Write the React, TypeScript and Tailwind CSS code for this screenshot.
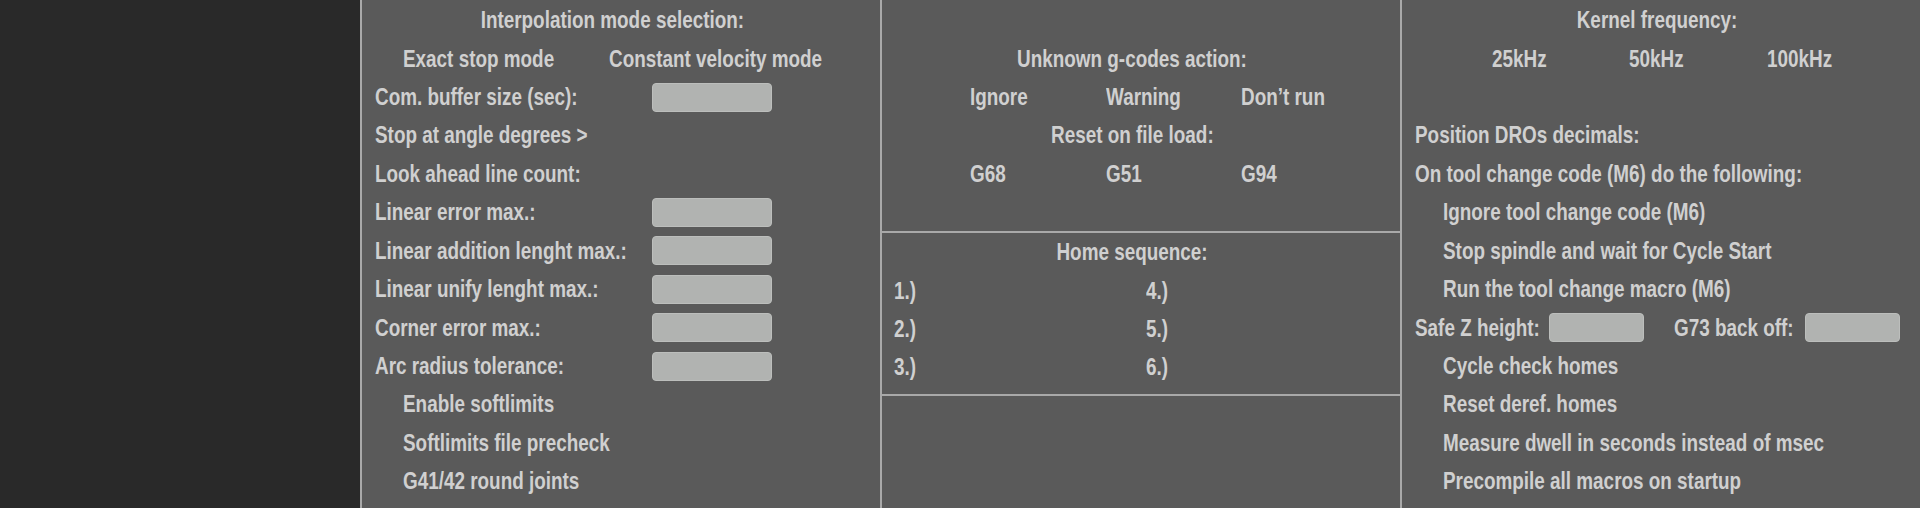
import React from "react";

const font = { fontFamily: '"Liberation Sans", Arial, sans-serif' };

// narrow text (the screen uses a condensed face)
const T: React.FC<{ children?: React.ReactNode; center?: boolean }> = ({ children, center }) => (
  <span className={`inline-block whitespace-nowrap scale-x-[0.787] ${center ? "origin-center" : "origin-left"}`}>
    {children}
  </span>
);

const Row: React.FC<{ children?: React.ReactNode; className?: string }> = ({ children, className = "" }) => (
  <div className={`h-[38.43px] flex items-center shrink-0 whitespace-nowrap ${className}`}>{children}</div>
);

const Field: React.FC<{ className?: string }> = ({ className = "w-[120px]" }) => (
  <div className={`h-[29px] rounded-[4px] bg-[#b1b3b1] border border-[#bcbebc] shrink-0 ${className}`}></div>
);

const App: React.FC = () => {
  const leftFields = [
    ["Com. buffer size (sec):", true],
    ["Stop at angle degrees >", false],
    ["Look ahead line count:", false],
    ["Linear error max.:", true],
    ["Linear addition lenght max.:", true],
    ["Linear unify lenght max.:", true],
    ["Corner error max.:", true],
    ["Arc radius tolerance:", true],
  ] as const;

  return (
    <div className="flex w-[1920px] h-[508px] overflow-hidden bg-[#5a5a5a] text-[#d0d0d0] text-[24px] font-bold" style={font}>
      <div className="w-[360px] h-full bg-[#292929] shrink-0"></div>

      {/* interpolation column */}
      <div className="w-[520px] h-full border-l-2 border-[#a9a9a9] flex flex-col pt-[1px] shrink-0">
        <Row className="justify-center pr-[17px]">
          <T center>Interpolation mode selection:</T>
        </Row>
        <Row className="pl-[41px]">
          <div className="w-[209px]">
            <T>Exact stop mode</T>
          </div>
          <T>Constant velocity mode</T>
        </Row>
        {leftFields.map(([label, input]) => (
          <Row key={label} className="pl-[13px]">
            <div className="w-[277px]">
              <T>{label}</T>
            </div>
            {input && <Field />}
          </Row>
        ))}
        <Row className="pl-[41px]">
          <T>Enable softlimits</T>
        </Row>
        <Row className="pl-[41px]">
          <T>Softlimits file precheck</T>
        </Row>
        <Row className="pl-[41px]">
          <T>G41/42 round joints</T>
        </Row>
      </div>

      {/* g-codes / home column */}
      <div className="w-[520px] h-full border-l-2 border-[#a9a9a9] flex flex-col shrink-0">
        <div className="h-[233px] border-b-2 border-[#a9a9a9] flex flex-col pt-[1px] shrink-0">
          <Row />
          <Row className="justify-center pr-[17px]">
            <T center>Unknown g-codes action:</T>
          </Row>
          <Row className="pl-[88px]">
            <div className="w-[136px]">
              <T>Ignore</T>
            </div>
            <div className="w-[135px]">
              <T>Warning</T>
            </div>
            <T>Don’t run</T>
          </Row>
          <Row className="justify-center pr-[17px]">
            <T center>Reset on file load:</T>
          </Row>
          <Row className="pl-[88px]">
            <div className="w-[136px]">
              <T>G68</T>
            </div>
            <div className="w-[135px]">
              <T>G51</T>
            </div>
            <T>G94</T>
          </Row>
        </div>
        <div className="h-[163px] border-b-2 border-[#a9a9a9] flex flex-col shrink-0">
          <Row className="justify-center pr-[17px]">
            <T center>Home sequence:</T>
          </Row>
          {[
            ["1.)", "4.)"],
            ["2.)", "5.)"],
            ["3.)", "6.)"],
          ].map(([a, b]) => (
            <Row key={a} className="pl-[12px]">
              <div className="w-[252px]">
                <T>{a}</T>
              </div>
              <T>{b}</T>
            </Row>
          ))}
        </div>
        <div className="flex-1"></div>
      </div>

      {/* kernel column */}
      <div className="w-[520px] h-full border-l-2 border-[#a9a9a9] flex flex-col pt-[1px] shrink-0">
        <Row className="justify-center pr-[8px]">
          <T center>Kernel frequency:</T>
        </Row>
        <Row className="pl-[90px]">
          <div className="w-[137px]">
            <T>25kHz</T>
          </div>
          <div className="w-[138px]">
            <T>50kHz</T>
          </div>
          <T>100kHz</T>
        </Row>
        <Row />
        <Row className="pl-[13px]">
          <T>Position DROs decimals:</T>
        </Row>
        <Row className="pl-[13px]">
          <T>On tool change code (M6) do the following:</T>
        </Row>
        <Row className="pl-[41px]">
          <T>Ignore tool change code (M6)</T>
        </Row>
        <Row className="pl-[41px]">
          <T>Stop spindle and wait for Cycle Start</T>
        </Row>
        <Row className="pl-[41px]">
          <T>Run the tool change macro (M6)</T>
        </Row>
        <Row className="pl-[13px]">
          <div className="w-[134px]">
            <T>Safe Z height:</T>
          </div>
          <Field className="w-[95px]" />
          <div className="w-[161px] pl-[30px]">
            <T>G73 back off:</T>
          </div>
          <Field className="w-[95px]" />
        </Row>
        <Row className="pl-[41px]">
          <T>Cycle check homes</T>
        </Row>
        <Row className="pl-[41px]">
          <T>Reset deref. homes</T>
        </Row>
        <Row className="pl-[41px]">
          <T>Measure dwell in seconds instead of msec</T>
        </Row>
        <Row className="pl-[41px]">
          <T>Precompile all macros on startup</T>
        </Row>
      </div>
    </div>
  );
};

export default App;
